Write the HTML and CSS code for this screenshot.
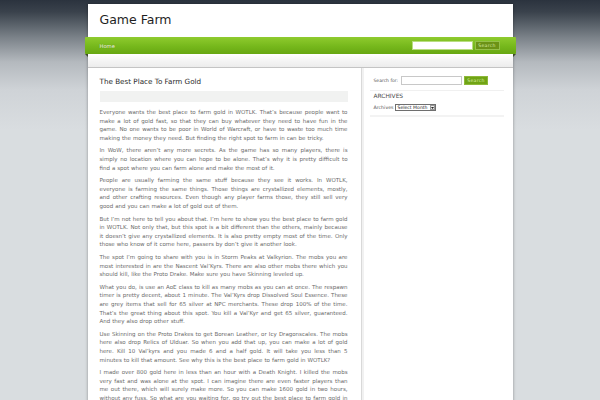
FILE: index.html
```html
<!DOCTYPE html>
<html lang="en">
<head>
<meta charset="utf-8">
<title>Game Farm</title>
<link rel="stylesheet" href="styles.css">
</head>
<body>
<div class="page">
  <header class="header">
    <h1 class="site-title">Game Farm</h1>
  </header>
  <nav class="nav">
    <a class="nav-link" href="#">Home</a>
    <form class="nav-search">
      <input class="nav-input" type="text">
      <button class="nav-btn" type="button">Search</button>
    </form>
  </nav>
  <div class="strip"></div>
  <div class="main">
    <article class="content">
      <h2 class="post-title">The Best Place To Farm Gold</h2>
      <div class="post-meta"></div>
      <div class="post-body">
        <p>Everyone wants the best place to farm gold in WOTLK. That’s because people want to make a lot of gold fast, so that they can buy whatever they need to have fun in the game. No one wants to be poor in World of Warcraft, or have to waste too much time making the money they need. But finding the right spot to farm in can be tricky.</p>
        <p>In WoW, there aren’t any more secrets. As the game has so many players, there is simply no location where you can hope to be alone. That’s why it is pretty difficult to find a spot where you can farm alone and make the most of it.</p>
        <p>People are usually farming the same stuff because they see it works. In WOTLK, everyone is farming the same things. Those things are crystallized elements, mostly, and other crafting resources. Even though any player farms those, they still sell very good and you can make a lot of gold out of them.</p>
        <p>But I’m not here to tell you about that. I’m here to show you the best place to farm gold in WOTLK. Not only that, but this spot is a bit different than the others, mainly because it doesn’t give any crystallized elements. It is also pretty empty most of the time. Only those who know of it come here, passers by don’t give it another look.</p>
        <p>The spot I’m going to share with you is in Storm Peaks at Valkyrion. The mobs you are most interested in are the Nascent Val’Kyrs. There are also other mobs there which you should kill, like the Proto Drake. Make sure you have Skinning leveled up.</p>
        <p>What you do, is use an AoE class to kill as many mobs as you can at once. The respawn timer is pretty decent, about 1 minute. The Val’Kyrs drop Dissolved Soul Essence. These are grey items that sell for 65 silver at NPC merchants. These drop 100% of the time. That’s the great thing about this spot. You kill a Val’Kyr and get 65 silver, guaranteed. And they also drop other stuff.</p>
        <p>Use Skinning on the Proto Drakes to get Borean Leather, or Icy Dragonscales. The mobs here also drop Relics of Ulduar. So when you add that up, you can make a lot of gold here. Kill 10 Val’kyrs and you made 6 and a half gold. It will take you less than 5 minutes to kill that amount. See why this is the best place to farm gold in WOTLK?</p>
        <p>I made over 800 gold here in less than an hour with a Death Knight. I killed the mobs very fast and was alone at the spot. I can imagine there are even faster players than me out there, which will surely make more. So you can make 1600 gold in two hours, without any fuss. So what are you waiting for, go try out the best place to farm gold in WOTLK.</p>
      </div>
    </article>
    <aside class="sidebar">
      <div class="widget search-widget">
        <label class="search-label">Search for:</label>
        <input class="side-input" type="text">
        <button class="side-btn" type="button">Search</button>
      </div>
      <div class="widget archive-widget">
        <h3 class="widget-title">ARCHIVES</h3>
        <div class="archive-row">
          <span class="archive-label">Archives</span>
          <span class="select-wrap">
            <span class="select-text">Select Month</span>
            <span class="select-arrow"><svg width="3" height="2" viewBox="0 0 6 4"><path d="M0 0H6L3 4Z" fill="#222"/></svg></span>
          </span>
        </div>
      </div>
    </aside>
  </div>
</div>
</body>
</html>
```
FILE: styles.css
```css
html, body {
  margin: 0;
  padding: 0;
}
body {
  min-height: 400px;
  background: linear-gradient(#2b333e 0px, #3a424c 12px, #7c838a 38px, #b4b9be 62px, #cfd3d7 90px, #d9dde0 130px) no-repeat, #d9dde0;
  font-family: "DejaVu Sans", "Liberation Sans", sans-serif;
}
.page {
  width: 425px;
  margin: 4px auto 0;
  background: #fff;
  box-shadow: 0 0 3px rgba(0, 0, 0, 0.35);
}
.header {
  height: 33px;
  display: flex;
  align-items: center;
  padding-left: 12px;
}
.site-title {
  margin: 0;
  font-size: 12.5px;
  font-weight: normal;
  line-height: 1;
  color: #1f1f1f;
}
.nav {
  position: relative;
  margin: 0 -3px;
  height: 17px;
  padding: 0 16px 0 15px;
  display: flex;
  align-items: center;
  justify-content: space-between;
  background: linear-gradient(#8fcb2e, #76b81c 55%, #67a712);
  border-radius: 1px;
}
.nav::before,
.nav::after {
  content: "";
  position: absolute;
  top: 17px;
  width: 0;
  height: 0;
  border-top: 3px solid #3f4a2a;
}
.nav::before {
  left: 0;
  border-left: 3px solid transparent;
}
.nav::after {
  right: 0;
  border-right: 3px solid transparent;
}
.nav-link {
  color: #f4f9e8;
  font-size: 5.2px;
  text-decoration: none;
  text-shadow: 0 0 1px rgba(60, 90, 10, 0.6);
}
.nav-search {
  display: flex;
  align-items: center;
  gap: 2px;
  margin: 0;
}
.nav-input {
  box-sizing: border-box;
  width: 61px;
  height: 9px;
  margin: 0;
  padding: 0;
  border: 1px solid #b8dd80;
  background: #fff;
}
.nav-btn {
  box-sizing: border-box;
  width: 25px;
  height: 9px;
  margin: 0;
  padding: 0;
  border: 1px solid #95c04a;
  background: #6b9216;
  color: #d6e9a6;
  font-family: "DejaVu Sans", sans-serif;
  font-size: 4.6px;
  letter-spacing: 0.3px;
  line-height: 7px;
}
.strip {
  height: 13px;
  background: linear-gradient(#ffffff, #f3f3f3 60%, #ececec);
  border-bottom: 1px solid #c4c4c4;
}
.main {
  display: flex;
  align-items: stretch;
}
.content {
  flex: 0 0 248px;
  padding: 9px 13px 20px 12px;
  border-right: 1px solid #d9d9d9;
}
.post-title {
  margin: 0;
  font-size: 7.2px;
  line-height: 10px;
  font-weight: normal;
  color: #2a2a2a;
}
.post-meta {
  margin-top: 4px;
  height: 11px;
  background: #f1f2f1;
}
.post-body {
  margin-top: 6px;
}
.post-body p {
  margin: 0 0 3.84px;
  font-size: 5.5px;
  word-spacing: 0.22px;
  line-height: 8.64px;
  text-align: justify;
  color: #6a6a6a;
}
.sidebar {
  flex: 1;
  border-left: 2px solid #f1f1f1;
  padding-top: 8px;
}
.widget {
  margin: 0 9px 0 6px;
  padding-left: 4px;
}
.search-widget {
  display: flex;
  align-items: center;
  height: 9px;
  padding-bottom: 5px;
  border-bottom: 1px solid #f0f0f0;
}
.search-label {
  font-size: 4.5px;
  color: #555;
  margin-right: 3px;
}
.side-input {
  box-sizing: border-box;
  width: 61px;
  height: 9px;
  margin: 0 2px 0 0;
  padding: 0;
  border: 1px solid #c8c8c8;
  background: #fff;
}
.side-btn {
  box-sizing: border-box;
  width: 24px;
  height: 9px;
  margin: 0;
  padding: 0;
  border: 1px solid #8db83a;
  background: #70a414;
  color: #d9eeaa;
  font-family: "DejaVu Sans", sans-serif;
  font-size: 4.6px;
  letter-spacing: 0.3px;
  line-height: 7px;
}
.archive-widget {
  padding-top: 2px;
  padding-bottom: 4px;
  border-bottom: 2px solid #f3f3f3;
}
.widget-title {
  margin: 0;
  font-size: 5.9px;
  line-height: 7px;
  font-weight: normal;
  color: #4a4a4a;
}
.archive-row {
  margin-top: 4px;
  display: flex;
  align-items: center;
  height: 7px;
}
.archive-label {
  font-size: 4.7px;
  color: #555;
  margin-right: 2px;
}
.select-wrap {
  box-sizing: border-box;
  display: inline-flex;
  align-items: stretch;
  width: 41px;
  height: 7px;
  border: 1px solid #6f6f6f;
  background: #fff;
}
.select-text {
  flex: 1;
  font-size: 4.6px;
  line-height: 5px;
  padding-left: 1px;
  color: #222;
}
.select-arrow {
  width: 5px;
  display: flex;
  align-items: center;
  justify-content: center;
  border: 1px solid #999;
  background: #eee;
  box-sizing: border-box;
}
```
